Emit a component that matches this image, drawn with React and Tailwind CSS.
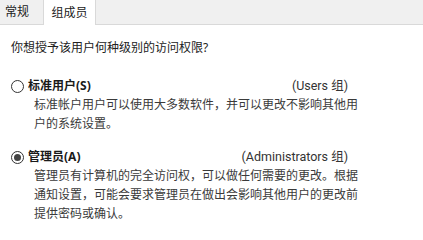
import React from 'react'

const font = { fontFamily: '"Noto Sans", "Noto Sans CJK SC", sans-serif' }
const latin = { fontFamily: 'Roboto, "Noto Sans CJK SC", sans-serif' }

const Radio = ({ checked }) => (
  <span className="w-[13px] h-[13px] rounded-full border border-[#333] bg-white flex items-center justify-center shrink-0">
    {checked && <span className="w-[7px] h-[7px] rounded-full bg-[#444]"></span>}
  </span>
)

const Option = ({ checked, label, hotkey, group, lines, className }) => (
  <div className={className}>
    <div className="flex items-center justify-between w-[348px] pl-[11px] h-[18px] leading-[18px]">
      <div className="flex items-center gap-[4px]">
        <Radio checked={checked} />
        <span className="font-bold text-[#1a1a1a] text-[12px]">{label}({hotkey})</span>
      </div>
      <span className="text-[#333] text-[12.5px]" style={latin}>{group}</span>
    </div>
    <div className="pl-[34px] text-[12px] leading-[19px] text-[#3a3a3a]">
      {lines.map((l, i) => (
        <div key={i} className="whitespace-nowrap">{l}</div>
      ))}
    </div>
  </div>
)

export default function App() {
  return (
    <div className="w-[423px] h-[237px] bg-white overflow-hidden" style={font}>
      <div className="h-[25px] bg-[#f0f0f0] border-b border-[#d9d9d9] flex items-end">
        <div className="w-[43px] h-[24px] flex items-center pl-[5px] text-[12px] text-[#222]">常规</div>
        <div className="w-[53px] h-[25px] -mb-px bg-white border-x border-[#d9d9d9] flex items-center justify-center text-[12px] text-[#222]">组成员</div>
      </div>
      <div className="pt-[13px] pl-[11px] text-[12px] leading-[19px] text-[#222]">你想授予该用户何种级别的访问权限?</div>
      <Option
        className="mt-[20px]"
        label="标准用户"
        hotkey="S"
        group="(Users 组)"
        lines={['标准帐户用户可以使用大多数软件，并可以更改不影响其他用', '户的系统设置。']}
      />
      <Option
        className="mt-[15px]"
        checked
        label="管理员"
        hotkey="A"
        group="(Administrators 组)"
        lines={[
          '管理员有计算机的完全访问权，可以做任何需要的更改。根据',
          '通知设置，可能会要求管理员在做出会影响其他用户的更改前',
          '提供密码或确认。',
        ]}
      />
    </div>
  )
}
